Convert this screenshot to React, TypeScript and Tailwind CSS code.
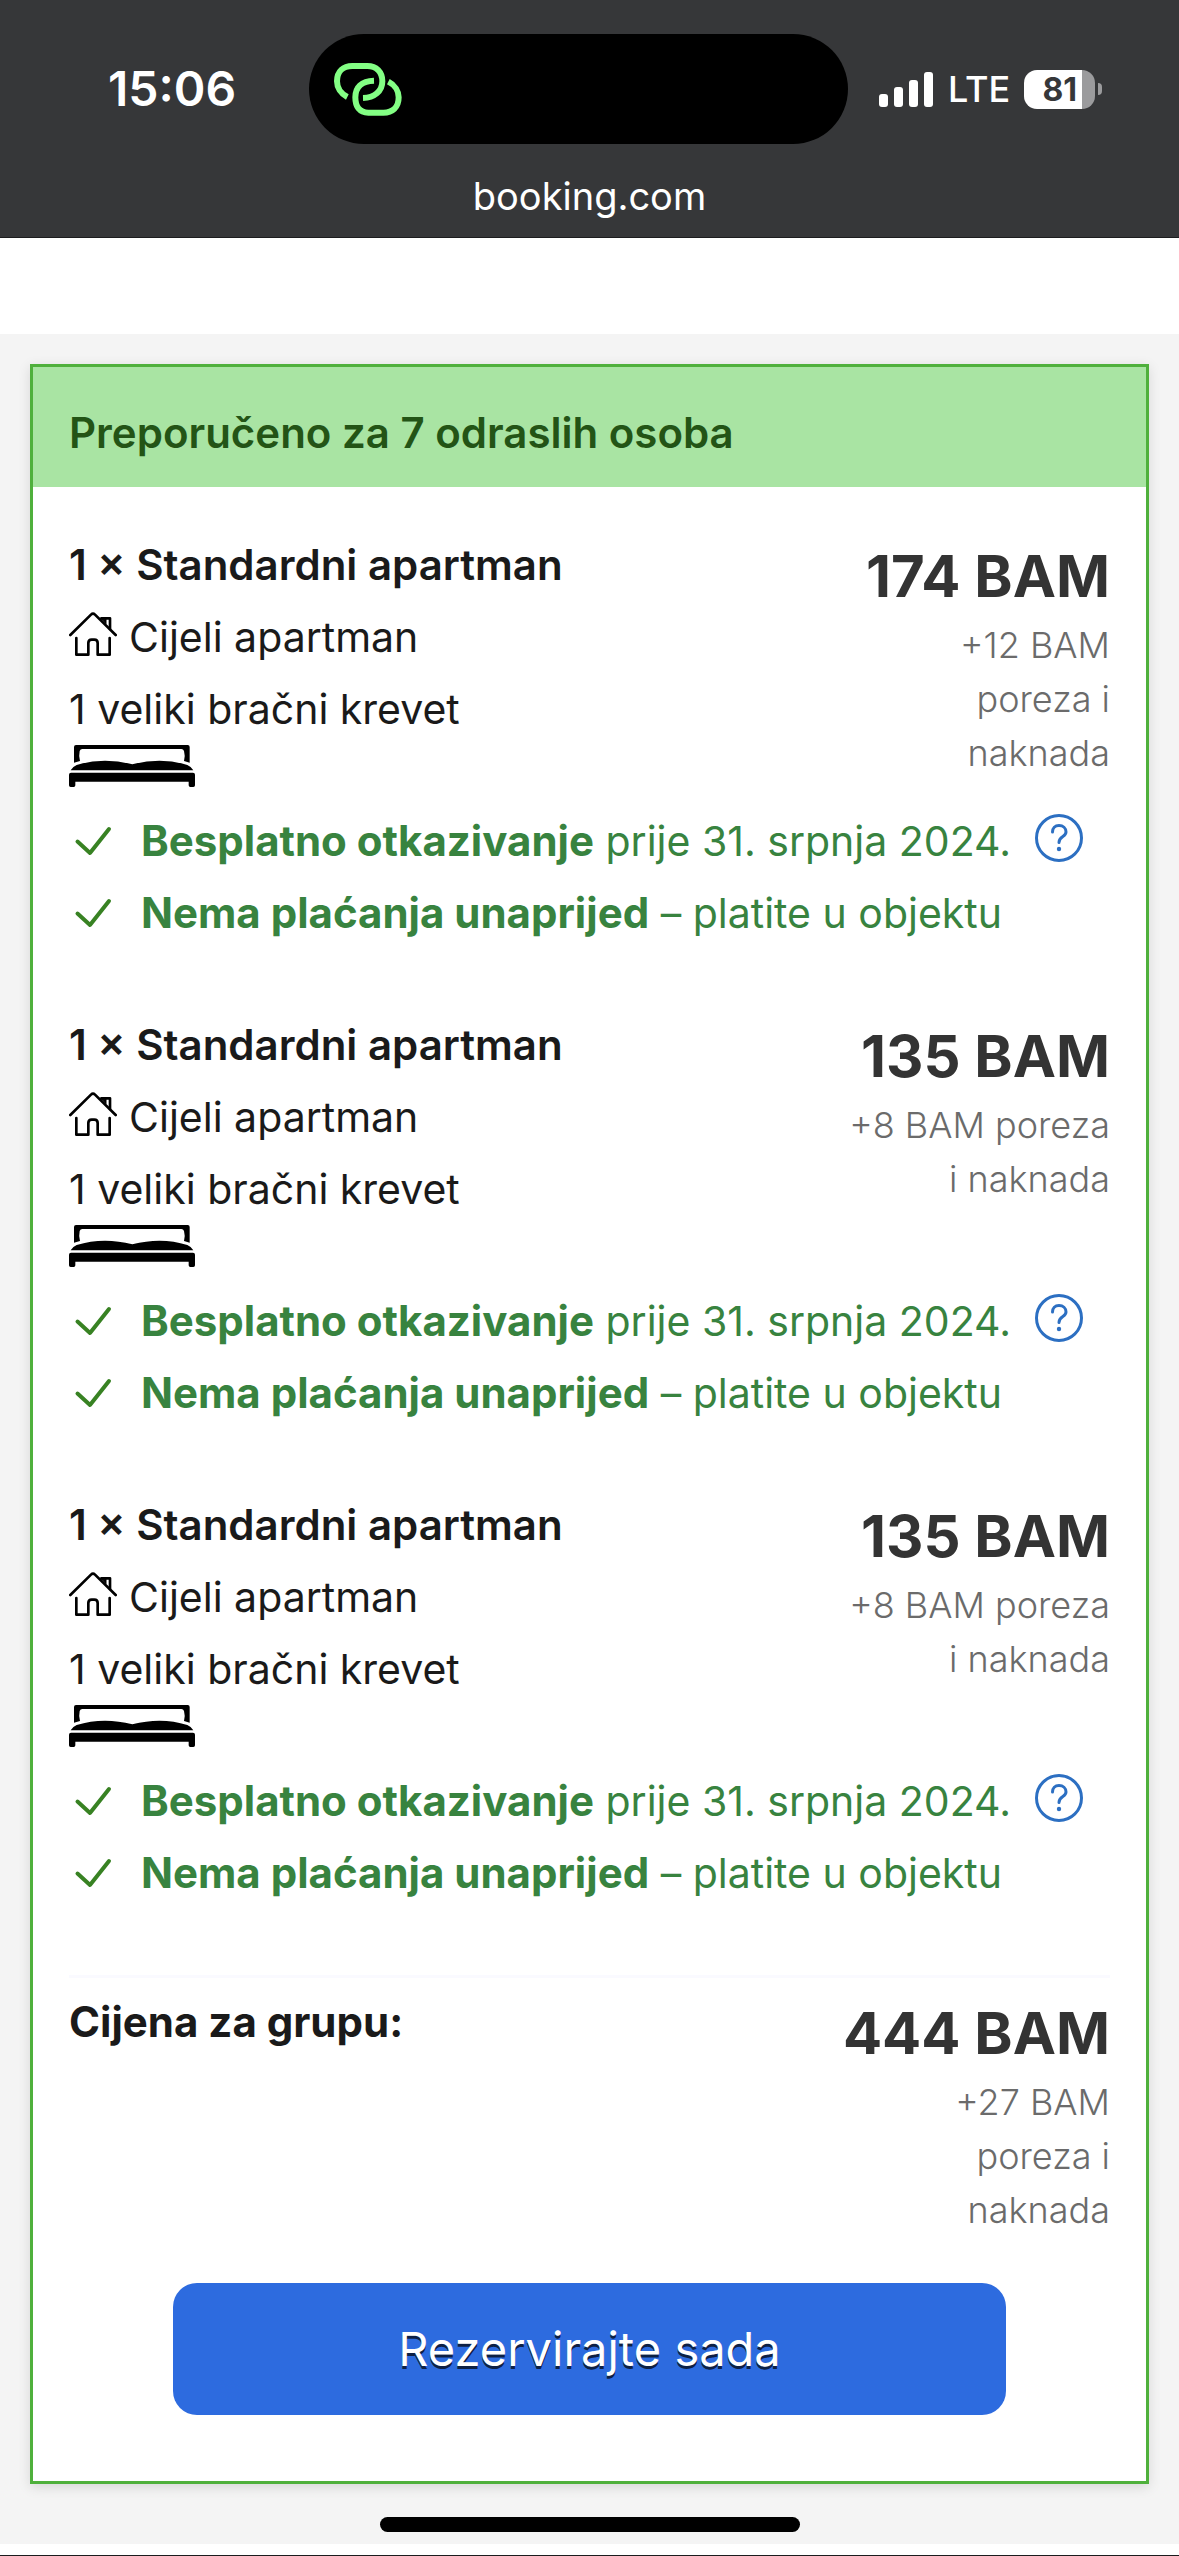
type Room = {
  id: number;
  price: string;
  taxes: string[];
};

const rooms: Room[] = [
  { id: 1, price: '174 BAM', taxes: ['+12 BAM', 'poreza i', 'naknada'] },
  { id: 2, price: '135 BAM', taxes: ['+8 BAM poreza', 'i naknada'] },
  { id: 3, price: '135 BAM', taxes: ['+8 BAM poreza', 'i naknada'] },
];

function LinkIcon() {
  return (
    <svg viewBox="42 37 204 159" className="w-[68px] h-[53px]" fill="none" stroke="#83ff84" strokeWidth="18">
      <path d="M82 139C62 129 51 110 51 92C51 62 70 46 97 46H142C169 46 187 64 187 92C187 122 163 141 129 142" />
      <path d="M205 93C225 103 236 122 236 140C236 170 217 186 190 186H145C118 186 106 168 106 140C106 110 124 91 162 90" />
    </svg>
  );
}

function SignalIcon() {
  return (
    <svg viewBox="0 0 54 35" className="w-[54px] h-[35px]" fill="#fff">
      <rect x="0" y="22" width="9" height="13" rx="3" />
      <rect x="15" y="15" width="9" height="20" rx="3" />
      <rect x="30" y="8" width="9" height="27" rx="3" />
      <rect x="45" y="0" width="9" height="35" rx="3" />
    </svg>
  );
}

function HouseIcon() {
  return (
    <svg
      viewBox="27 35 144 150"
      className="w-12 h-[50px]"
      fill="none"
      stroke="#000"
      strokeWidth="8"
      strokeLinecap="round"
      strokeLinejoin="round"
    >
      <path d="M31 104L93 43Q99 37 105 43L167 104" />
      <path d="M124 54H150V86" />
      <path d="M126 57L138 70V57Z" fill="#000" strokeWidth="3" />
      <path d="M49 113V163H85V128Q85 118 95 118H103Q113 118 113 128V163H149V113" />
    </svg>
  );
}

function BedIcon() {
  return (
    <svg viewBox="27 435 378 126" className="block w-[126px] h-[42px]" fill="#000">
      <path d="M42 441Q42 435 48 435H383Q389 435 389 441V488L372 483Q376 465 372 453Q370 447 364 447H67Q61 447 59 453Q56 465 60 483L42 488Z" />
      <path d="M32 511Q38 500 50 495Q130 470 217 493Q304 470 382 495Q394 500 400 511Z" />
      <path d="M27 524Q27 518 33 518H399Q405 518 405 524V556Q405 561 400 561H391Q386 561 386 556V545H46V556Q46 561 41 561H32Q27 561 27 556Z" />
    </svg>
  );
}

function CheckIcon() {
  return (
    <svg
      viewBox="0 0 48 48"
      className="w-12 h-12 shrink-0"
      fill="none"
      stroke="#388223"
      strokeWidth="4"
      strokeLinecap="round"
      strokeLinejoin="round"
    >
      <path d="M8.500 24.500L21 36L40 12" />
    </svg>
  );
}

function HelpIcon() {
  return (
    <svg viewBox="0 0 48 54" className="w-12 h-[54px]" fill="none" stroke="#2c6fc2" strokeWidth="3" strokeLinecap="round">
      <circle cx="24" cy="24" r="22.500" />
      <path d="M17.500 18C17.500 14 20 11.500 24 11.500C28 11.500 31 14 31 18C31 23 24 22 24 28.500" />
      <circle cx="24" cy="35" r="2.200" fill="#2c6fc2" stroke="none" />
    </svg>
  );
}

function Price({ amount, taxes }: { amount: string; taxes: string[] }) {
  return (
    <div className="pt-[5px] text-right whitespace-nowrap">
      <p className="text-[58px] leading-[84px] font-bold text-[#333333]">{amount}</p>
      {taxes.map((line) => (
        <p key={line} className="text-[36px] leading-[54px] font-light text-[#6b6b6b]">
          {line}
        </p>
      ))}
    </div>
  );
}

function RoomBlock({ room }: { room: Room }) {
  return (
    <section>
      <div className="flex justify-between h-[258px]">
        <div>
          <h3 className="text-[42px] font-semibold">1 × Standardni apartman</h3>
          <p className="flex items-center gap-3">
            <HouseIcon />
            Cijeli apartman
          </p>
          <p>1 veliki bračni krevet</p>
          <BedIcon />
        </div>
        <Price amount={room.price} taxes={room.taxes} />
      </div>

      <ul className="mt-[18px] text-[#38833f]">
        <li className="flex items-center gap-6">
          <CheckIcon />
          <span>
            <b className="text-[42px] font-bold">Besplatno otkazivanje</b> prije 31. srpnja 2024.
          </span>
          <button type="button" aria-label="Više informacija">
            <HelpIcon />
          </button>
        </li>
        <li className="flex items-center gap-6">
          <CheckIcon />
          <span>
            <b className="text-[42px] font-bold">Nema plaćanja unaprijed</b> – platite u objektu
          </span>
        </li>
      </ul>
    </section>
  );
}

function StatusBar() {
  return (
    <header className="bg-[#363739] text-white border-b border-[#1c1c1e] pt-[34px] pb-[10px]">
      <div className="grid grid-cols-[309fr_539px_331fr] items-center h-[110px]">
        <span className="pl-[108px] text-[48px] leading-[60px] font-semibold">15:06</span>
        <div className="flex items-center h-full rounded-full bg-black pl-[25px]">
          <LinkIcon />
        </div>
        <div className="flex items-center pl-[31px]">
          <SignalIcon />
          <span className="ml-[15px] text-[36px] leading-[44px] font-medium">LTE</span>
          <div className="ml-[14px] flex items-center gap-[3px]">
            <div className="flex items-center justify-center w-[71px] h-[39px] rounded-[13px] bg-[linear-gradient(to_right,#fff_58px,#9b9b9d_58px)] text-[32px] leading-[39px] font-bold text-[#363739]">
              81
            </div>
            <div className="w-1 h-3 rounded-r-full bg-[#9b9b9d]" />
          </div>
        </div>
      </div>
      <p className="mt-[22px] text-center text-[38px] leading-[61px]">booking.com</p>
    </header>
  );
}

export default function App() {
  return (
    <div className="bg-white font-[Inter,'Liberation_Sans',sans-serif] text-[41px] leading-[72px] text-[#1a1a1a] border-b border-[#1c1c1e] pb-[11px]">
      <StatusBar />

      <main className="mt-24 bg-[#f4f4f4] px-[30px] pt-[30px] pb-3">
        <div className="bg-white border-3 border-[#4fb03c] shadow-[0_3px_12px_rgba(0,0,0,0.12)]">
          <h2 className="bg-[#a9e4a3] px-9 pt-[30px] pb-[18px] text-[42px] font-semibold text-[#235416]">
            Preporučeno za 7 odraslih osoba
          </h2>

          <div className="px-9 pt-[42px] pb-[66px]">
            <div className="flex flex-col gap-[60px]">
              {rooms.map((room) => (
                <RoomBlock key={room.id} room={room} />
              ))}
            </div>

            <div className="mt-[66px] pt-2 border-t-3 border-[#fafaff] flex justify-between">
              <h3 className="text-[42px] font-bold">Cijena za grupu:</h3>
              <Price amount="444 BAM" taxes={['+27 BAM', 'poreza i', 'naknada']} />
            </div>

            <button
              type="button"
              className="block w-4/5 h-[132px] mt-[46px] mx-auto rounded-3xl bg-[#2d6bdf] text-[47px] text-white [text-shadow:0_3px_0_rgba(0,0,0,0.7)]"
            >
              Rezervirajte sada
            </button>
          </div>
        </div>

        {/* Home indicator */}
        <div className="mt-[33px] mx-auto w-[420px] h-[15px] rounded-full bg-black" />
      </main>
    </div>
  );
}
